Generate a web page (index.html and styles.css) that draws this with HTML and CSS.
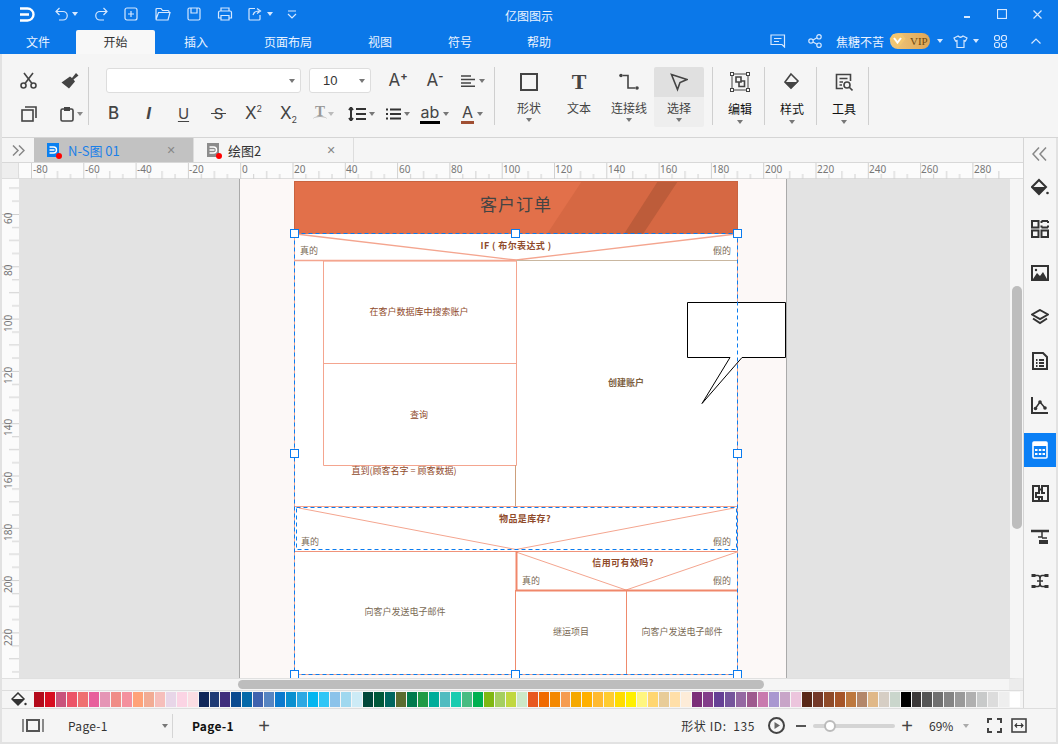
FILE: index.html
```html
<!DOCTYPE html>
<html lang="zh">
<head>
<meta charset="utf-8">
<title>亿图图示</title>
<link rel="stylesheet" href="styles.css">
</head>
<body>
<div class="app">
  <header class="titlebar">
    <span class="slot"><svg width="16" height="15" viewBox="0 0 16 15"><path d="M1 1.500H8.500a6 6 0 0 1 0 12H1M1 7.500H10" class="w25"/></svg></span>
    <span class="slot"><svg width="13" height="14" viewBox="0 0 13 14"><path d="M4.500 1L1 4.500L4.500 8M1 4.500H8a4 4 0 0 1 0 8.500H4" class="w1"/></svg></span>
    <span class="slot"><i class="caret white"></i></span>
    <span class="slot"><svg width="13" height="14" viewBox="0 0 13 14"><path d="M8.500 1L12 4.500L8.500 8M12 4.500H5a4 4 0 0 0 0 8.500H9" class="w1"/></svg></span>
    <span class="slot"><svg width="14" height="14" viewBox="0 0 14 14"><rect x="1" y="1" width="12" height="12" rx="2" class="w1"/><path d="M7 4V10M4 7H10" class="w1"/></svg></span>
    <span class="slot"><svg width="16" height="14" viewBox="0 0 16 14"><path d="M1 12V2.500Q1 1.500 2 1.500H6L7.500 3.500H13Q14 3.500 14 4.500V5M1 12.500Q1 13 2 13H13L15 5.500H3.500L1 12.500" class="w1"/></svg></span>
    <span class="slot"><svg width="14" height="14" viewBox="0 0 14 14"><rect x="1" y="1" width="12" height="12" rx="1.500" class="w1"/><path d="M4 1V6H10V1" class="w1"/></svg></span>
    <span class="slot"><svg width="16" height="14" viewBox="0 0 16 14"><path d="M4 4V1H12V4M4 11H1.500V5.500Q1.500 4 3 4H13Q14.500 4 14.500 5.500V11H12M4 8.500H12V13H4Z" class="w1"/></svg></span>
    <span class="slot"><svg width="14" height="14" viewBox="0 0 14 14"><path d="M7 1.500H2Q1 1.500 1 2.500V12Q1 13 2 13H11Q12 13 12 12V8" class="w1"/><path d="M5 8Q6 4 11 4M9 1.500L12.500 4L9 6.500" class="w1"/></svg></span>
    <span class="slot"><i class="caret white"></i></span>
    <span class="slot"><svg width="10" height="9" viewBox="0 0 10 9"><path d="M1 1H9M1 4L5 8L9 4" class="w1"/></svg></span>
    <span class="app-title">亿图图示</span>
    <span></span>
    <span class="slot"><i class="min"></i></span>
    <span class="slot"><svg width="10" height="10" viewBox="0 0 10 10"><rect x=".5" y=".5" width="9" height="9" class="w1"/></svg></span>
    <span class="slot"><svg width="9" height="9" viewBox="0 0 9 9"><path d="M.5 .5L8.500 8.500M8.500 .5L.5 8.500" class="w1"/></svg></span>
  </header>

  <nav class="menubar">
    <a class="menu">文件</a>
    <a class="menu active">开始</a>
    <a class="menu">插入</a>
    <a class="menu">页面布局</a>
    <a class="menu">视图</a>
    <a class="menu">符号</a>
    <a class="menu">帮助</a>
    <span></span>
    <span class="slot"><svg width="16" height="14" viewBox="0 0 16 14"><path d="M1 1H14.500V10.500V13L12 10.500H1ZM4 4.500H11.500M4 7.500H9" class="w1"/></svg></span>
    <span class="slot"><svg width="14" height="14" viewBox="0 0 14 14"><circle cx="3" cy="7" r="2.200" class="w1"/><circle cx="11" cy="2.800" r="2.200" class="w1"/><circle cx="11" cy="11.200" r="2.200" class="w1"/><path d="M5 6L9 3.800M5 8L9 10.200" class="w1"/></svg></span>
    <span class="user">焦糖不苦</span>
    <span class="slot"><span class="vip"><svg width="17" height="16" viewBox="0 0 17 16"><path d="M4 1H13L16.500 6L8.500 15.500L.5 6Z" fill="#f3c66e"/><path d="M5 5L8.500 9.500L12 5" fill="none" stroke="#fff" stroke-width="2"/></svg><b>VIP</b></span></span>
    <span class="slot"><i class="caret white"></i></span>
    <span class="slot"><svg width="15" height="13" viewBox="0 0 15 13"><path d="M5 1L1 3L2.500 6L4 5.500V12.500H11V5.500L12.500 6L14 3L10 1Q7.500 3.500 5 1Z" class="w1"/></svg></span>
    <span class="slot"><i class="caret white"></i></span>
    <span class="slot"><svg width="13" height="13" viewBox="0 0 13 13"><rect x=".5" y=".5" width="5" height="5" rx="2" class="w1"/><rect x="7.500" y=".5" width="5" height="5" rx="2" class="w1"/><rect x=".5" y="7.500" width="5" height="5" rx="2" class="w1"/><rect x="7.500" y="7.500" width="5" height="5" rx="2" class="w1"/></svg></span>
    <span class="slot"><svg width="10" height="6" viewBox="0 0 10 6"><path d="M.5 5.500L5 1L9.500 5.500" class="w1"/></svg></span>
  </nav>

  <section class="ribbon">
    <div class="group clip">
      <span class="slot"><svg width="17" height="17" viewBox="0 0 17 17"><circle cx="3.500" cy="13.500" r="2.500" class="ic"/><circle cx="13.500" cy="13.500" r="2.500" class="ic"/><path d="M5 11.500L13 1M12 11.500L4 1" class="ic"/></svg></span>
      <span class="slot brush"><svg width="18" height="17" viewBox="0 0 18 17"><path d="M11 6L15 1L17.500 3.500L12.500 7.500L14 9.500L8 16.500L.5 10.500L9 4.500Z" fill="#444"/></svg></span>
      <span class="slot"><svg width="16" height="16" viewBox="0 0 16 16"><rect x="1" y="4" width="11" height="11" class="ic"/><path d="M4 1H15V12" class="ic"/></svg></span>
      <span class="slot paste"><svg width="14" height="16" viewBox="0 0 14 16"><rect x="1" y="3" width="12" height="12" rx="1.500" class="ic"/><rect x="4" y="1" width="6" height="4" fill="#444"/></svg><i class="caret"></i></span>
    </div>
    <div class="group font">
      <div class="font-row">
        <span class="select wide"><i class="caret"></i></span>
        <span class="select size"><em>10</em><i class="caret"></i></span>
        <span class="t w54"><span class="glyph ga">A<sup>+</sup></span></span>
        <span class="t w20"><span class="glyph ga">A<sup>-</sup></span></span>
        <span class="t w56"><svg width="15" height="12" viewBox="0 0 15 12"><path d="M0 1H10M0 4.500H14M0 8H10M0 11.200H14" class="ic" /></svg><i class="caret"></i></span>
      </div>
      <div class="font-row low">
        <span class="t w35"><b class="glyph">B</b></span>
        <span class="t w35"><b class="glyph it">I</b></span>
        <span class="t w35"><span class="glyph ul">U</span></span>
        <span class="t w35"><span class="glyph strike">S</span></span>
        <span class="t w35"><span class="glyph">X<sup>2</sup></span></span>
        <span class="t w35"><span class="glyph">X<sub>2</sub></span></span>
        <span class="t w37 faded"><span class="glyph arc">T</span><i class="caret"></i></span>
        <span class="t w36"><svg width="18" height="14" viewBox="0 0 18 14"><path d="M3 1V13M1 3L3 .5L5 3M1 11L3 13.500L5 11M8 2H18M8 7H18M8 12H18" class="th"/></svg><i class="caret"></i></span>
        <span class="t w38"><svg width="15" height="12" viewBox="0 0 15 12"><path d="M0 1.500H2M4 1.500H15M0 6H2M4 6H15M0 10.500H2M4 10.500H15" class="th"/></svg><i class="caret"></i></span>
        <span class="t w35"><span class="glyph und black">ab</span><i class="caret"></i></span>
        <span class="t w40"><span class="glyph und brown">A</span><i class="caret"></i></span>
      </div>
    </div>
    <div class="group tools">
      <div class="tool"><svg width="18" height="18" viewBox="0 0 18 18"><rect x="1" y="1" width="16" height="16" class="th2"/></svg><span>形状</span><i class="caret"></i></div>
      <div class="tool"><span class="glyph big">T</span><span>文本</span></div>
      <div class="tool"><svg width="20" height="18" viewBox="0 0 20 18"><circle cx="2" cy="2.500" r="1.800" fill="#444"/><circle cx="18" cy="15" r="1.800" fill="#444"/><path d="M4 2.500H9V15H16" class="ic"/></svg><span>连接线</span><i class="caret"></i></div>
      <div class="tool on"><svg width="18" height="18" viewBox="0 0 18 18"><path d="M1.500 1.500L17 6.500L10 9.500L7.500 16.500Z" class="ic"/></svg><span>选择</span><i class="caret"></i></div>
    </div>
    <div class="group solo">
      <div class="tool dark"><svg width="20" height="20" viewBox="0 0 20 20"><rect x="2" y="2" width="16" height="16" class="hair"/><rect x=".5" y=".5" width="3" height="3" class="hair w"/><rect x="16.500" y=".5" width="3" height="3" class="hair w"/><rect x=".5" y="16.500" width="3" height="3" class="hair w"/><rect x="16.500" y="16.500" width="3" height="3" class="hair w"/><path d="M6 5H11V10H6ZM11 9H14.500V14.500H9V10" class="ic"/></svg><span>编辑</span><i class="caret"></i></div>
    </div>
    <div class="group solo">
      <div class="tool dark"><svg width="16" height="18" viewBox="0 0 16 18"><path d="M7 1L14 8L7 15L1 9Z" class="ic"/><path d="M1 9H14L7 15.500Z" fill="#444"/></svg><span>样式</span><i class="caret"></i></div>
    </div>
    <div class="group solo">
      <div class="tool dark"><svg width="18" height="18" viewBox="0 0 18 18"><path d="M8 15.500H1.500V1.500H15.500V8M4.500 5.500H12.500M4.500 9H8M4.500 12H7" class="ic"/><circle cx="12" cy="12" r="3" class="ic"/><path d="M14 14L17.500 17.500" class="ic"/></svg><span>工具</span><i class="caret"></i></div>
    </div>
  </section>

  <main class="middle">
    <div class="work">
      <div class="tabs">
        <span class="tab-more"><svg width="13" height="11" viewBox="0 0 13 11"><path d="M1 .5L6 5.500L1 10.500M7 .5L12 5.500L7 10.500" class="chev"/></svg></span>
        <div class="tab cur">
          <span class="doc blue"><svg width="12" height="14" viewBox="0 0 12 14"><path d="M2.500 4H6.500a3 3 0 0 1 0 6H2.500M2.500 7H7.500" fill="none" stroke="#fff" stroke-width="1.400"/></svg><i></i></span>
          <span class="tab-name">N-S图 01</span>
          <span class="x">✕</span>
        </div>
        <div class="tab">
          <span class="doc"><svg width="12" height="14" viewBox="0 0 12 14"><path d="M2.500 4H6.500a3 3 0 0 1 0 6H2.500M2.500 7H7.500" fill="none" stroke="#fff" stroke-width="1.400"/></svg><i></i></span>
          <span class="tab-name">绘图2</span>
          <span class="x">✕</span>
        </div>
      </div>
      <div class="ruler-row">
        <span class="corner"></span>
        <svg class="hruler" width="989" height="16" viewBox="19 163 989 16">
          <defs>
            <pattern id="ht" patternUnits="userSpaceOnUse" x="31" y="163" width="52.3" height="16"><path d="M.5 0V16M13.500 11V16M26.500 8V16M39.500 11V16" stroke="#d0d0d0" fill="none"/></pattern>
            <pattern id="vt" patternUnits="userSpaceOnUse" x="2" y="214" width="17" height="52.3"><path d="M0 .5H17M10 13.500H17M7 26.500H17M10 39.500H17" stroke="#d0d0d0" fill="none"/></pattern>
          </defs>
          <rect x="19" y="163" width="989" height="16" fill="url(#ht)"/>
          <g class="rt">
            <text x="33" y="173">-80</text><text x="85" y="173">-60</text><text x="137" y="173">-40</text><text x="189" y="173">-20</text><text x="242" y="173">0</text><text x="294" y="173">20</text><text x="346" y="173">40</text><text x="399" y="173">60</text><text x="451" y="173">80</text><text x="503" y="173">100</text><text x="555" y="173">120</text><text x="608" y="173">140</text><text x="660" y="173">160</text><text x="712" y="173">180</text><text x="765" y="173">200</text><text x="817" y="173">220</text><text x="869" y="173">240</text><text x="921" y="173">260</text><text x="974" y="173">280</text>
          </g>
        </svg>
      </div>
      <div class="canvas-row">
        <svg class="vruler" width="17" height="499" viewBox="2 179 17 499">
          <rect x="2" y="179" width="17" height="499" fill="url(#vt)"/>
          <g class="rt">
            <text transform="translate(12 224) rotate(-90)">60</text>
            <text transform="translate(12 276) rotate(-90)">80</text>
            <text transform="translate(12 332) rotate(-90)">100</text>
            <text transform="translate(12 384) rotate(-90)">120</text>
            <text transform="translate(12 436) rotate(-90)">140</text>
            <text transform="translate(12 489) rotate(-90)">160</text>
            <text transform="translate(12 541) rotate(-90)">180</text>
            <text transform="translate(12 593) rotate(-90)">200</text>
            <text transform="translate(12 646) rotate(-90)">220</text>
          </g>
        </svg>
        <svg class="canvas" width="991" height="499" viewBox="19 179 991 499">
          <rect x="19" y="179" width="991" height="499" fill="#e3e3e3"/>
          <rect x="239.500" y="170" width="547" height="520" fill="#fcf8f7" stroke="#aaa"/>
          <rect x="294" y="181" width="444" height="53" fill="#e2704a"/>
          <path d="M547 234L582 181H738V234Z" fill="#d66843"/>
          <path d="M624 234L658 181H678L643 234Z" fill="#bd5c3a"/>
          <path d="M294.500 234V181.500H737.500V234" fill="none" stroke="#c9633f"/>
          <text x="516" y="211" class="head">客户订单</text>
          <rect x="294" y="234" width="444" height="440" fill="#fff"/>

          <g class="sal">
            <path d="M296 234L516 260L736 234" stroke-width="1.300"/>
            <path d="M294.500 260.500H516" stroke-width="1.300"/>
            <path d="M516 260.500H737.500" stroke="#c9b7a0"/>
            <path d="M323.500 261H516.500V465.500H323.500ZM323.500 363.500H516.500"/>
            <path d="M515.500 465V506" stroke="#cda07c"/>
            <path d="M294.500 506.500H737.500"/>
            <path d="M299 508L516 549.500L734 508"/>
            <path d="M294.500 551.500H737.500" stroke="#f0937a"/>
            <path d="M516 552L626 590L737 552"/>
            <path d="M516.500 551V590" stroke-width="2" stroke="#f0876a"/>
            <path d="M516 590.500H738" stroke-width="2" stroke="#f0876a"/>
            <path d="M515.500 590V674M626.500 590V674" stroke="#ee8a6c"/>
            <path d="M294.500 674.500H737.500M294.500 234V674M737.500 234V674"/>
          </g>
          <path d="M296.500 507.500H736.500V549.500H296.500Z" class="sel"/>

          <g class="lbl">
            <text x="516" y="249" class="st">IF ( 布尔表达式 )</text>
            <text x="309" y="254">真的</text>
            <text x="722" y="254">假的</text>
            <text x="419" y="315" class="rd">在客户数据库中搜索账户</text>
            <text x="419" y="418" class="rd">查询</text>
            <text x="404" y="474" class="rd">直到(顾客名字 = 顾客数据)</text>
            <text x="626" y="386" class="bd">创建账户</text>
            <text x="525" y="522" class="st">物品是库存?</text>
            <text x="310" y="545">真的</text>
            <text x="722" y="545">假的</text>
            <text x="623" y="566" class="st">信用可有效吗?</text>
            <text x="531" y="584">真的</text>
            <text x="722" y="584">假的</text>
            <text x="405" y="615">向客户发送电子邮件</text>
            <text x="571" y="635">继运项目</text>
            <text x="682" y="635">向客户发送电子邮件</text>
          </g>

          <path d="M687.500 302.500H785.500V357.500H742L702 403.500L730 357.500H687.500Z" fill="#fff" stroke="#000"/>
          <path d="M294.500 233.500H737.500V674.500H294.500Z" class="sel"/>
          <g class="hd">
            <rect x="290.500" y="229.500" width="8" height="8"/><rect x="511.500" y="229.500" width="8" height="8"/><rect x="733.500" y="229.500" width="8" height="8"/>
            <rect x="290.500" y="449.500" width="8" height="8"/><rect x="733.500" y="449.500" width="8" height="8"/>
            <rect x="290.500" y="670.500" width="8" height="8"/><rect x="511.500" y="670.500" width="8" height="8"/><rect x="733.500" y="670.500" width="8" height="8"/>
          </g>
        </svg>
        <div class="vscroll"><i></i></div>
      </div>
      <div class="hscroll"><i></i></div>
      <div class="palette">
        <span class="pal-ic"><svg width="16" height="15" viewBox="0 0 16 15"><path d="M7 1L13 7L7 13L1 7Z" class="ic2"/><path d="M1 7H13L7 13Z" fill="#333"/><circle cx="14.500" cy="12" r="1.200" fill="#333"/></svg></span>
        <div class="swatches">
          <i style="background:#b40a1b"></i><i style="background:#d80d20"></i><i style="background:#c9547c"></i><i style="background:#ec5468"></i><i style="background:#ef7070"></i><i style="background:#e8609c"></i><i style="background:#e595b5"></i><i style="background:#f08d87"></i><i style="background:#f4919e"></i><i style="background:#ffa278"></i><i style="background:#f2ac94"></i><i style="background:#f6bfbb"></i><i style="background:#e8d6e8"></i><i style="background:#fbd4e4"></i><i style="background:#fbdde3"></i>
          <i style="background:#10275a"></i><i style="background:#1f3b75"></i><i style="background:#3f2e7c"></i><i style="background:#0a4a90"></i><i style="background:#0469a9"></i><i style="background:#3f62ae"></i><i style="background:#5685c2"></i><i style="background:#0a7ace"></i><i style="background:#0a90d0"></i><i style="background:#2ea9e3"></i><i style="background:#04b6f0"></i><i style="background:#30c6f6"></i><i style="background:#8cc3ea"></i><i style="background:#a0d8ef"></i><i style="background:#cdebf6"></i>
          <i style="background:#00473a"></i><i style="background:#00583a"></i><i style="background:#00665f"></i><i style="background:#5a6c2f"></i><i style="background:#007a4d"></i><i style="background:#1f9a45"></i><i style="background:#00ad9a"></i><i style="background:#50bcc0"></i><i style="background:#1accb0"></i><i style="background:#48bc82"></i><i style="background:#00b050"></i><i style="background:#80b812"></i><i style="background:#a5cf60"></i><i style="background:#c1d840"></i><i style="background:#cce8c8"></i>
          <i style="background:#e85820"></i><i style="background:#f06a00"></i><i style="background:#f48800"></i><i style="background:#f59c50"></i><i style="background:#f5a800"></i><i style="background:#ffb000"></i><i style="background:#ffba30"></i><i style="background:#ffcc30"></i><i style="background:#ffdc00"></i><i style="background:#fff000"></i><i style="background:#fff680"></i><i style="background:#ffd670"></i><i style="background:#e8cc98"></i><i style="background:#ffdfa8"></i><i style="background:#fdecd8"></i>
          <i style="background:#7b2e78"></i><i style="background:#833d8a"></i><i style="background:#664095"></i><i style="background:#76559c"></i><i style="background:#9568a2"></i><i style="background:#9e5a8e"></i><i style="background:#c97aae"></i><i style="background:#a997d0"></i><i style="background:#c8a5c8"></i><i style="background:#ecc5dd"></i>
          <i style="background:#5a2818"></i><i style="background:#743828"></i><i style="background:#8f4a28"></i><i style="background:#a65528"></i><i style="background:#bd783e"></i><i style="background:#b3876a"></i><i style="background:#e0b888"></i><i style="background:#d6cec4"></i><i style="background:#cad6cc"></i>
          <i style="background:#000"></i><i style="background:#3b3838"></i><i style="background:#555"></i><i style="background:#707070"></i><i style="background:#848484"></i><i style="background:#9a9a9a"></i><i style="background:#b0b0b0"></i><i style="background:#c8caca"></i><i style="background:#dcdcdc"></i><i style="background:#eee"></i><i style="background:#fff"></i>
        </div>
      </div>
    </div>
    <aside class="side">
      <span class="side-btn top"><svg width="16" height="14" viewBox="0 0 16 14"><path d="M7 .5L1 7L7 13.500M14 .5L8 7L14 13.500" class="chev"/></svg></span>
      <span class="side-btn"><svg width="18" height="20" viewBox="0 0 18 20"><path d="M8 2L15 9L8 16L1 9Z" class="th"/><path d="M1 9H15L8 16.500Z" fill="#333"/><circle cx="16.500" cy="15" r="1.300" fill="#333"/></svg></span>
      <span class="side-btn"><svg width="18" height="18" viewBox="0 0 18 18"><rect x="1" y="1" width="6.500" height="6.500" class="th"/><path d="M10.500 1H17M10.500 7.500H17M10.500 1V3M17 1V3M10.500 5.500V7.500M17 5.500V7.500" class="th"/><rect x="1" y="10.500" width="6.500" height="6.500" class="th"/><rect x="10.500" y="10.500" width="6.500" height="6.500" class="th"/></svg></span>
      <span class="side-btn"><svg width="18" height="16" viewBox="0 0 18 16"><rect x="1" y="1" width="16" height="14" class="th"/><path d="M2 14L6 8L9 11L12 7L16 14Z" fill="#333"/><circle cx="5" cy="5" r="1.200" fill="#333"/></svg></span>
      <span class="side-btn"><svg width="18" height="17" viewBox="0 0 18 17"><path d="M9 1L17 5.500L9 10L1 5.500Z" class="th"/><path d="M2 9.500L9 14L16 9.500" class="th"/></svg></span>
      <span class="side-btn"><svg width="16" height="18" viewBox="0 0 16 18"><path d="M1 1H11L15 5V17H1ZM4 8H5.500M7 8H12M4 11H5.500M7 11H12M4 14H5.500M7 14H12" class="th"/></svg></span>
      <span class="side-btn"><svg width="18" height="18" viewBox="0 0 18 18"><path d="M1 1V17H17" class="th"/><path d="M4 13L9 6L14 12" class="ic2"/><circle cx="4.500" cy="12.500" r="1.800" fill="#333"/><circle cx="9" cy="6" r="1.800" fill="#333"/><circle cx="14" cy="12" r="1.800" fill="#333"/></svg></span>
      <span class="side-btn sel-btn"><svg width="16" height="18" viewBox="0 0 16 18"><rect x="1" y="1" width="14" height="16" rx="1" fill="none" stroke="#fff" stroke-width="1.600"/><rect x="1" y="1" width="14" height="4" fill="#fff"/><path d="M3 8H5.500V10H3ZM6.800 8H9.300V10H6.800ZM10.500 8H13V10H10.500ZM3 12H5.500V14H3ZM6.800 12H9.300V14H6.800ZM10.500 12H13V14H10.500Z" fill="#fff"/></svg></span>
      <span class="side-btn"><svg width="17" height="17" viewBox="0 0 17 17"><path d="M1 1H7V4.500H10V1H16V16H1ZM10 4.500V8H13M7 4.500V8H4V12H7V16M10 16V12H7" class="th"/></svg></span>
      <span class="side-btn"><svg width="18" height="16" viewBox="0 0 18 16"><path d="M0 2H18" stroke="#333" stroke-width="2.500"/><path d="M11 2V8H7M11 9H16" class="ic2"/><rect x="8" y="11" width="9" height="4" fill="#333"/></svg></span>
      <span class="side-btn"><svg width="18" height="16" viewBox="0 0 18 16"><rect x=".5" y="1" width="4" height="3" fill="#333"/><rect x="13.500" y="1" width="4" height="3" fill="#333"/><rect x=".5" y="12" width="4" height="3" fill="#333"/><rect x="13.500" y="12" width="4" height="3" fill="#333"/><path d="M4 2.500H7Q9 2.500 9 6V10Q9 13.500 7 13.500H4M14 2.500H11Q9 2.500 9 6V10Q9 13.500 11 13.500H14M6 8H12" class="ic2"/></svg></span>
    </aside>
  </main>

  <footer class="status">
    <span class="pages-ic"><svg width="22" height="13" viewBox="0 0 22 13"><path d="M1 0V13M21 0V13" stroke="#666" stroke-width="1.500"/><rect x="5" y="1" width="12" height="11" fill="none" stroke="#555" stroke-width="2"/></svg></span>
    <span class="page-sel">Page-1<i class="caret"></i></span>
    <span class="page-tab">Page-1</span>
    <span class="add">+</span>
    <span class="status-right">
      <span class="sid">形状 ID:&nbsp; 135</span>
      <svg width="17" height="17" viewBox="0 0 17 17"><circle cx="8.500" cy="8.500" r="7.500" class="th2"/><path d="M6.500 5L12 8.500L6.500 12Z" fill="#666"/></svg>
      <span class="minus"></span>
      <span class="slider"><i></i></span>
      <span class="add plus">+</span>
      <span class="zoom">69%</span><i class="caret lite"></i>
      <svg class="fs" width="15" height="15" viewBox="0 0 15 15"><path d="M1 5V1H5M10 1H14V5M14 10V14H10M5 14H1V10" class="th2"/></svg>
      <svg class="fit" width="16" height="15" viewBox="0 0 16 15"><rect x="1" y="1" width="14" height="13" class="ic"/><path d="M4 7.500H12M6 5.500L4 7.500L6 9.500M10 5.500L12 7.500L10 9.500" class="hair2"/></svg>
    </span>
  </footer>
</div>
</body>
</html>
```

FILE: styles.css
```css
* { box-sizing: border-box; }
html, body { margin: 0; padding: 0; }
body { width: 1058px; height: 744px; overflow: hidden; font: 12px "Noto Sans CJK SC", "Noto Sans", sans-serif; color: #333; background: #e2e2e2; }
svg { display: block; flex: none; }
i { font-style: normal; }
.app { display: flex; flex-direction: column; height: 744px; }

.w1 { fill: none; stroke: #d6e8ff; stroke-width: 1.200; }
.w25 { fill: none; stroke: #fff; stroke-width: 2.400; }
.ic { fill: none; stroke: #444; stroke-width: 1.600; }
.ic2 { fill: none; stroke: #333; stroke-width: 1.500; }
.th { fill: none; stroke: #333; stroke-width: 2; }
.th2 { fill: none; stroke: #444; stroke-width: 2; }
.hair { fill: none; stroke: #444; stroke-width: 1; }
.hair.w { fill: #fff; }
.hair2 { fill: none; stroke: #333; stroke-width: 1.100; }
.chev { fill: none; stroke: #888; stroke-width: 1.500; }

.slot { display: flex; align-items: center; justify-content: center; }
.caret { display: block; width: 0; height: 0; border: 3.500px solid transparent; border-top: 4px solid #777; border-bottom: 0; flex: none; }
.caret.white { border-top-color: #d6e8ff; }
.caret.lite { border-top-color: #aaa; }

.titlebar { height: 28px; background: #0b78e9; color: #fff; display: grid; align-items: center;
  grid-template-columns: 53px 16px 12px 40px 20px 44px 18px 44px 16px 14px 30px 444px 206px 20px 50px 20px 11px; }
.app-title { text-align: center; font-size: 12px; color: #eaf3ff; padding-top: 3px; }
.min { display: block; width: 6px; height: 2px; background: #d6e8ff; margin-top: 6px; }

.menubar { height: 26px; background: #0b78e9; color: #fff; display: grid; align-items: center;
  grid-template-columns: 76px 79px 82px 102px 82px 78px 80px 183px 32px 42px 54px 40px 20px 20px 12px 36px 36px 4px; }
.menu { text-align: center; line-height: 24px; height: 24px; margin-top: 2px; color: #eaf3ff; }
.menu.active { background: #f8f8f8; color: #333; border-radius: 2px 2px 0 0; }
.user { color: #eaf3ff; }
.vip { display: flex; align-items: center; width: 48px; height: 16px; border-radius: 8px; background: linear-gradient(90deg, #eec77f, #dfa654); }
.vip svg { margin-left: -1px; }
.vip b { font: 400 11px "Liberation Serif", serif; color: #6e4a10; margin-left: 4px; }

.ribbon { height: 84px; margin-left: 2px; background: #f5f5f5; border-bottom: 1px solid #d5d5d5; display: flex; padding-top: 13px; }
.group { height: 58px; border-right: 1px solid #cfcfcf; flex: none; }
.clip { width: 87px; display: grid; grid-template-columns: 53px 33px; grid-template-rows: 26px 26px; row-gap: 8px; align-items: center; }
.brush { margin-right: 4px; }
.paste { gap: 3px; }
.paste .caret { border-top-color: #888; }
.font { width: 406px; padding-top: 1px; }
.font-row { display: flex; align-items: center; padding-left: 17px; height: 25px; }
.font-row.low { padding-left: 7px; margin-top: 8px; }
.select { display: flex; align-items: center; justify-content: flex-end; height: 25px; background: #fff; border: 1px solid #ddd; border-radius: 3px; padding-right: 5px; flex: none; }
.select.wide { width: 195px; }
.select.size { width: 62px; margin-left: 8px; justify-content: space-between; padding-left: 13px; }
.select em { font: 13px "Liberation Sans", sans-serif; color: #333; font-style: normal; }
.t { display: flex; align-items: center; justify-content: center; gap: 3px; flex: none; height: 25px; }
.w20 { width: 20px; } .w35 { width: 35px; } .w36 { width: 36px; } .w37 { width: 37px; } .w38 { width: 38px; } .w40 { width: 40px; } .w54 { width: 54px; } .w56 { width: 56px; }
.glyph { font: 400 17px/1 "Inter", "Liberation Sans", sans-serif; color: #444; }
.glyph sup, .glyph sub { font-size: 9px; line-height: 0; }
.glyph.ga sup { font-weight: 700; font-size: 11px; vertical-align: 6px; }
b.glyph { font-weight: 500; }
b.glyph.it { font: italic 700 17px/1 "Liberation Sans", sans-serif; }
.ul { text-decoration: underline; text-underline-offset: 2px; font-size: 15px; }
.strike { font-size: 15px; position: relative; }
.strike::after { content: ""; position: absolute; left: -3px; right: -3px; top: 7px; height: 1px; background: #444; }
.faded .glyph { color: #999; }
.faded .caret { border-top-color: #bbb; }
.arc { position: relative; font-family: "Liberation Serif", serif; font-weight: 700; font-size: 15px; top: -2px; }
.arc::after { content: ""; position: absolute; left: -2px; right: -2px; top: 12px; height: 5px; border-top: 1.500px solid #aaa; border-radius: 50%; }
.und { border-bottom-width: 3px; border-bottom-style: solid; padding: 0 1px; line-height: 17px; font-size: 16px; }
.und.black { border-bottom-color: #000; }
.und.brown { border-bottom-color: #a04f33; }
.tools { width: 218px; padding-left: 9px; display: flex; }
.tool { width: 50px; height: 60px; display: flex; flex-direction: column; align-items: center; padding-top: 5px; color: #444; flex: none; }
.tool svg, .tool .glyph.big { height: 20px; }
.tool > span:not(.glyph) { margin-top: 7px; line-height: 18px; }
.tool .caret { margin-top: 1px; }
.tool .glyph.big { font: 700 22px/20px "Liberation Serif", serif; }
.tool.on { background: linear-gradient(#e0e0e0 0 30px, #eee 30px); border-radius: 2px; }
.solo { width: 52px; padding-left: 1px; }
.tool.dark { width: 52px; color: #111; }
.tool.dark > span { margin-top: 8px; }
.tool.dark .caret { margin-top: 2px; }

.middle { height: 570px; display: flex; margin: 0 2px; }
.work { width: 1021px; display: flex; flex-direction: column; }
.tabs { height: 25px; display: flex; background: #f5f5f5; border-bottom: 1px solid #d8d8d8; }
.tab-more { width: 32px; display: flex; align-items: center; justify-content: center; }
.tab { width: 160px; display: flex; align-items: center; padding-left: 13px; border-right: 1px solid #ddd; }
.tab.cur { background: #c2c2c2; color: #1a7fe8; }
.doc { width: 12px; height: 14px; background: #8c8c8c; position: relative; margin-right: 9px; flex: none; }
.doc.blue { background: #0a80f0; }
.doc i { position: absolute; right: -3px; bottom: -2px; width: 6px; height: 6px; border-radius: 50%; background: #f00; }
.tab-name { width: 97px; font-size: 13px; white-space: nowrap; }
.x { color: #888; font: 11px "DejaVu Sans", sans-serif; width: 12px; text-align: center; }

.ruler-row { height: 16px; display: flex; background: #fbfbfb; border-bottom: 1px solid #ddd; }
.corner { width: 17px; background: #eee; border-right: 1px solid #ddd; }
.rt text { font: 10px "Noto Sans", sans-serif; fill: #777; }
.canvas-row { height: 499px; display: flex; }
.vruler { background: #fbfbfb; }
.head { font-size: 17px; fill: #444; text-anchor: middle; letter-spacing: 1px; }
.sal { fill: none; stroke: #f4a58f; stroke-width: 1; }
.sel { fill: none; stroke: #0a7cf0; stroke-width: 1; stroke-dasharray: 4 3; }
.hd rect { fill: #fff; stroke: #0a7cf0; stroke-width: 1; }
.lbl text { font-size: 9px; fill: #7a6a55; text-anchor: middle; }
.lbl .rd { fill: #8f4a2a; }
.lbl .st { font-weight: 700; fill: #8f4a2a; letter-spacing: .4px; }
.lbl .bd { font-weight: 700; fill: #7d5f3f; }
.vscroll { width: 13px; background: #f5f5f5; padding: 107px 1px 0 2px; }
.vscroll i { display: block; width: 10px; height: 243px; border-radius: 5px; background: #bdbdbd; }
.hscroll { height: 12px; background: #f5f5f5; border-top: 1px solid #e0e0e0; padding: 1px 0 0 236px; border-right: 14px solid #ececec; }
.hscroll i { display: block; width: 526px; height: 9px; border-radius: 5px; background: #bdbdbd; }
.palette { height: 18px; display: flex; background: #f5f5f5; border-top: 1px solid #ddd; }
.pal-ic { width: 32px; display: flex; align-items: center; justify-content: center; padding-left: 2px; }
.swatches { display: flex; padding-top: 1px; }
.swatches i { display: block; width: 10.980px; height: 15px; border-right: 1px solid #f5f5f5; flex: none; }

.side { width: 33px; background: #f5f5f5; border-left: 1px solid #d5d5d5; display: flex; flex-direction: column; align-items: center; }
.side-btn { width: 32px; height: 44px; display: flex; align-items: center; justify-content: center; flex: none; }
.side-btn.top { height: 31px; }
.side-btn:nth-child(2) { height: 38px; }
.side-btn.sel-btn { background: #0a7ff5; height: 34px; margin: 6px 0 4px; }

.status { height: 34px; margin: 0 2px; background: #f5f5f5; border-top: 1px solid #ddd; display: flex; align-items: center; }
.pages-ic { width: 20px; margin-left: 20px; }
.page-sel { width: 100px; margin-left: 26px; display: flex; align-items: center; justify-content: space-between; color: #333; letter-spacing: .3px; height: 24px; }
.page-tab { margin-left: 4px; padding-left: 19px; border-left: 1px solid #d5d5d5; font-weight: 700; height: 24px; line-height: 24px; color: #111; letter-spacing: .3px; width: 85px; }
.add { font: 400 20px/20px "Liberation Sans", sans-serif; color: #444; width: 14px; text-align: center; }
.status-right { margin-left: auto; display: flex; align-items: center; padding-right: 29px; }
.sid { margin-right: 13px; letter-spacing: .6px; white-space: nowrap; }
.minus { width: 10px; height: 2px; background: #555; margin: 0 7px 0 11px; }
.slider { width: 82px; height: 4px; background: #d4d4d4; border-radius: 2px; position: relative; }
.slider i { position: absolute; left: 11px; top: -4px; width: 12px; height: 12px; border-radius: 50%; background: #fff; border: 2px solid #bbb; }
.plus { margin-left: 5px; }
.zoom { margin-left: 15px; width: 26px; white-space: nowrap; }
.lite { margin-left: 8px; }
.fs { margin-left: 18px; }
.fit { margin-left: 9px; }
```
